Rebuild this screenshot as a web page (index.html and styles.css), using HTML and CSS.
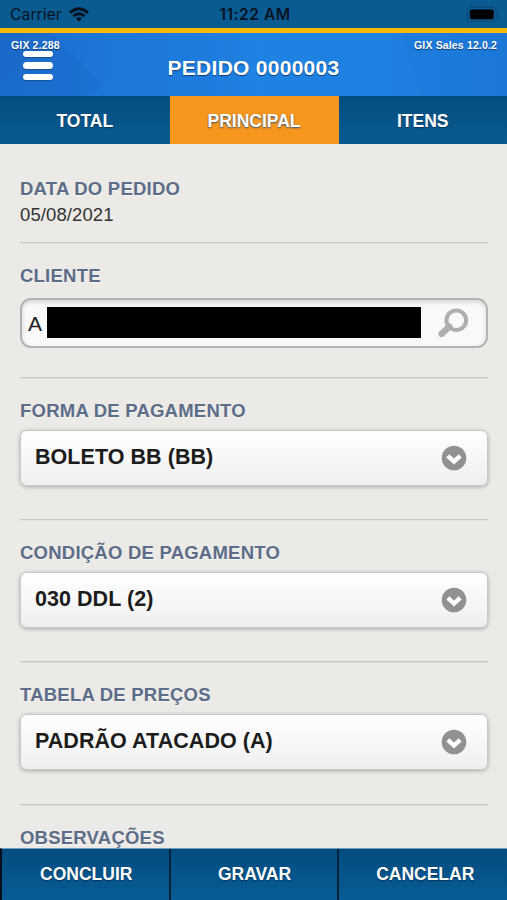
FILE: index.html
```html
<!DOCTYPE html>
<html lang="pt-BR">
<head>
    <meta charset="utf-8" />
    <title>Pedido</title>
    <link rel="stylesheet" href="styles.css">
</head>
<body>
    <div class="page">
        <div class="statusbar">
            <div class="carrier">
                <span>Carrier</span>
                <svg class="wifi" width="20" height="15" viewBox="0 0 20 15">
                    <g fill="none" stroke="#06131f" stroke-width="2.8">
                        <path d="M1 5.6 Q10 -2.2 19 5.6" />
                        <path d="M4.3 9.2 Q10 4.2 15.7 9.2" />
                    </g>
                    <path d="M6.9 11.4 Q10 8.9 13.1 11.4 L10 14.6 Z" fill="#06131f" />
                </svg>
            </div>
            <span class="clock">11:22 AM</span>
            <svg class="battery" width="34" height="17" viewBox="0 0 34 17">
                <rect x="1.3" y="1.2" width="29" height="14.2" rx="4.2" fill="none" stroke="#094a79" stroke-width="1.4" />
                <rect x="3.8" y="3.6" width="24" height="9.6" rx="2" fill="#000" />
                <path d="M31.8 6 Q34 8.3 31.8 10.6 Z" fill="#094a79" />
            </svg>
        </div>
        <div class="header">
            <svg class="header_bg" width="507" height="63" viewBox="0 0 507 63" preserveAspectRatio="none">
                <path d="M0 0 H52 L0 50 Z" fill="#1a61bd" opacity=".35" />
                <path d="M52 0 L102 52 L92 63 H0 V50 Z" fill="#1968c8" opacity=".3" />
                <path d="M102 52 L155 0 H238 V63 H92 Z" fill="#2079dc" opacity=".45" />
                <path d="M400 0 L425 63 H507 V0 Z" fill="#1a73d4" opacity=".15" />
            </svg>
            <span class="version">GIX 2.288</span>
            <div class="menu_btn"><i></i><i></i><i></i></div>
            <h1>PEDIDO 0000003</h1>
            <span class="appname">GIX Sales 12.0.2</span>
        </div>
        <ul class="tabs">
            <li>TOTAL</li>
            <li class="active">PRINCIPAL</li>
            <li>ITENS</li>
        </ul>
        <div class="content">
            <div class="field date">
                <label>DATA DO PEDIDO</label>
                <p>05/08/2021</p>
            </div>
            <div class="field client">
                <label>CLIENTE</label>
                <div class="search">
                    <span>A</span>
                    <div class="mask"></div>
                    <svg width="34" height="32" viewBox="0 0 34 32">
                        <circle cx="20.3" cy="13.2" r="9.8" fill="none" stroke="#aeaeae" stroke-width="4" />
                        <path d="M13.3 19.7 L5.6 26.9" stroke="#aeaeae" stroke-width="6.4" stroke-linecap="round" />
                    </svg>
                </div>
            </div>
            <div class="field">
                <label>FORMA DE PAGAMENTO</label>
                <div class="select">
                    <span>BOLETO BB (BB)</span>
                    <svg width="26" height="26" viewBox="0 0 26 26">
                        <circle cx="13" cy="13" r="12.3" fill="#919191" />
                        <path d="M6.8 10.8 L13 16.6 L19.2 10.8" fill="none" stroke="#fff" stroke-width="4.4" />
                    </svg>
                </div>
            </div>
            <div class="field">
                <label>CONDIÇÃO DE PAGAMENTO</label>
                <div class="select">
                    <span>030 DDL (2)</span>
                    <svg width="26" height="26" viewBox="0 0 26 26">
                        <circle cx="13" cy="13" r="12.3" fill="#919191" />
                        <path d="M6.8 10.8 L13 16.6 L19.2 10.8" fill="none" stroke="#fff" stroke-width="4.4" />
                    </svg>
                </div>
            </div>
            <div class="field">
                <label>TABELA DE PREÇOS</label>
                <div class="select">
                    <span>PADRÃO ATACADO (A)</span>
                    <svg width="26" height="26" viewBox="0 0 26 26">
                        <circle cx="13" cy="13" r="12.3" fill="#919191" />
                        <path d="M6.8 10.8 L13 16.6 L19.2 10.8" fill="none" stroke="#fff" stroke-width="4.4" />
                    </svg>
                </div>
            </div>
            <div class="field last">
                <label>OBSERVAÇÕES</label>
            </div>
        </div>
        <ul class="footer">
            <li>CONCLUIR</li>
            <li>GRAVAR</li>
            <li>CANCELAR</li>
        </ul>
    </div>
</body>
</html>
```
FILE: styles.css
```css
* {
    box-sizing:border-box;
}
body {
    margin:0;
    background:#ebeae6;
    font-family:"Liberation Sans", Arial, sans-serif;
}
ul, p, h1 {
    margin:0;
    padding:0;
    list-style:none;
}
svg {
    display:block;
}
.page {
    height:900px;
    display:flex;
    flex-direction:column;
    overflow:hidden;
}

/* status bar */
.statusbar {
    flex:none;
    height:33px;
    padding:1px 7px 0 10px;
    display:grid;
    grid-template-columns:1fr auto 1fr;
    align-items:center;
    background:#0b5b93;
    border-bottom:5px solid #fbb90c;
    color:#06131f;
    font-family:Inter, "Liberation Sans", sans-serif;
    font-size:15.8px;
}
.carrier {
    display:flex;
    align-items:center;
    gap:7px;
}
.clock {
    font-weight:600;
    font-size:15.5px;
    letter-spacing:.55px;
}
.battery {
    justify-self:end;
}

/* header */
.header {
    flex:none;
    height:63px;
    position:relative;
    display:flex;
    justify-content:center;
    background:linear-gradient(to right, #1c6dce 0, #1e83e3 50%, #1e80e1 75%, #1c79d8 100%);
    color:#fff;
    text-shadow:0 1px 1px #123c70;
}
.header_bg {
    position:absolute;
    left:0;
    top:0;
}
.header h1 {
    position:relative;
    line-height:70px;
    font-size:21px;
    letter-spacing:.27px;
}
.version, .appname {
    position:absolute;
    top:6px;
    font-size:10.5px;
    line-height:13px;
    font-weight:bold;
    letter-spacing:.15px;
}
.version {
    left:11px;
}
.appname {
    right:10px;
}
.menu_btn {
    position:absolute;
    left:23px;
    top:18px;
    width:30px;
    display:flex;
    flex-direction:column;
    gap:5px;
}
.menu_btn i {
    height:6.3px;
    border-radius:4px;
    background:#fff;
    box-shadow:0 1px 1px rgba(0,0,0,.25);
}

/* tabs */
.tabs {
    flex:none;
    height:48px;
    display:grid;
    grid-template-columns:169.5px 169px 1fr;
    background:linear-gradient(#034d80, #085b91);
}
.tabs li {
    line-height:50px;
    text-align:center;
    color:#fff;
    font-size:17.5px;
    font-weight:bold;
    text-shadow:0 1px 1px #0a3458;
}
.tabs .active {
    height:48px;
    background:#f8971d;
    text-shadow:0 1px 2px #33506e;
}

/* fields */
.content {
    flex:1;
    min-height:0;
    overflow:hidden;
    padding:0 19px 0 20px;
}
.field {
    height:142.2px;
    padding-top:21px;
    border-bottom:1px solid #c6c8c4;
    box-shadow:0 1px 0 #e0e0dc;
}
.field label {
    display:block;
    height:24px;
    line-height:24px;
    font-size:18.5px;
    font-weight:bold;
    letter-spacing:.23px;
    color:#5b6d89;
    text-shadow:0 1px 0 #f5f5f2;
}
.date {
    height:99px;
    padding-top:33px;
}
.date p {
    line-height:27px;
    font-size:18.5px;
    letter-spacing:.1px;
    color:#333;
}
.client {
    height:135px;
}
.search {
    height:50px;
    margin-top:10px;
    padding:0 16px 0 6px;
    display:flex;
    align-items:center;
    border:2px solid #b3b3b2;
    border-radius:11px;
    background:#f9f9f9;
    box-shadow:inset 0 2px 4px #d4d4d4;
    font-size:21px;
    color:#222;
}
.search span {
    width:19px;
    padding-top:2px;
}
.search .mask {
    width:374px;
    height:31px;
    margin-bottom:1px;
    background:#000;
}
.search svg {
    margin-left:auto;
}
.select {
    height:56px;
    margin-top:7px;
    padding:0 20px 0 14px;
    display:flex;
    align-items:center;
    justify-content:space-between;
    border:1px solid #c8c8c7;
    border-radius:7px;
    background:linear-gradient(#fff, #efefef);
    box-shadow:0 1px 4px rgba(0,0,0,.28);
    font-size:21.5px;
    font-weight:bold;
    color:#1c1c1c;
}
.select span {
    margin-bottom:1px;
    letter-spacing:.05px;
}
.last {
    border:0;
    box-shadow:none;
}

/* footer buttons */
.footer {
    flex:none;
    height:52px;
    display:grid;
    grid-template-columns:168.5px 168px 1fr;
    background:linear-gradient(#034c80, #085c94);
    border-top:1px solid #6f9cbc;
    border-left:2px solid #03101c;
}
.footer li {
    line-height:51px;
    padding-left:2px;
    text-align:center;
    color:#fff;
    font-size:17.5px;
    font-weight:bold;
    text-shadow:0 1px 1px #0a3458;
    border-right:2px solid #05223a;
}
.footer li:last-child {
    padding-left:5px;
    border-right:0;
}
```
